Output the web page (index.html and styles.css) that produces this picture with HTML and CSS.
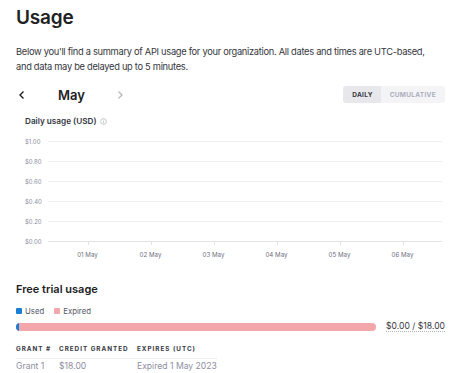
FILE: index.html
```html
<!DOCTYPE html>
<html>
<head>
<meta charset="utf-8">
<link rel="stylesheet" href="styles.css">
</head>
<body>
<main class="page">
  <h1 class="title">Usage</h1>
  <p class="intro">Below you'll find a summary of API usage for your organization. All dates and times are UTC-based, and data may be delayed up to 5 minutes.</p>

  <div class="toolbar">
    <div class="month-nav">
      <span class="arrow prev"><svg width="8" height="10" viewBox="0 0 8 10"><path d="M5.5 1.5 L2 5 L5.5 8.5" fill="none" stroke="#202123" stroke-width="1.4"/></svg></span>
      <span class="month">May</span>
      <span class="arrow next"><svg width="8" height="10" viewBox="0 0 8 10"><path d="M2.5 1.5 L6 5 L2.5 8.5" fill="none" stroke="#b4b4bc" stroke-width="1.2"/></svg></span>
    </div>
    <div class="seg">
      <span class="seg-btn active">DAILY</span>
      <span class="seg-btn">CUMULATIVE</span>
    </div>
  </div>

  <section class="chart">
    <div class="chart-title">Daily usage (USD) <svg class="info" width="7" height="7" viewBox="0 0 8 8"><circle cx="4" cy="4" r="3.3" fill="none" stroke="#b8b8c0" stroke-width="0.9"/><path d="M4 3.5 V6" stroke="#b8b8c0" stroke-width="0.9"/><circle cx="4" cy="2.3" r="0.5" fill="#b8b8c0"/></svg></div>
    <div class="rows">
      <div class="row"><span class="ylab">$1.00</span><span class="grid"></span></div>
      <div class="row"><span class="ylab">$0.80</span><span class="grid"></span></div>
      <div class="row"><span class="ylab">$0.60</span><span class="grid"></span></div>
      <div class="row"><span class="ylab">$0.40</span><span class="grid"></span></div>
      <div class="row"><span class="ylab">$0.20</span><span class="grid"></span></div>
      <div class="row"><span class="ylab">$0.00</span><span class="grid axis"></span></div>
    </div>
    <div class="xaxis">
      <span class="xtick">01 May</span>
      <span class="xtick">02 May</span>
      <span class="xtick">03 May</span>
      <span class="xtick">04 May</span>
      <span class="xtick">05 May</span>
      <span class="xtick">06 May</span>
    </div>
  </section>

  <section class="trial">
    <h2 class="trial-title">Free trial usage</h2>
    <div class="legend">
      <span class="key"><i class="sw used"></i>Used</span>
      <span class="key"><i class="sw expired"></i>Expired</span>
    </div>
    <div class="bar-row">
      <div class="bar"><div class="bar-used"></div></div>
      <span class="amount">$0.00 / $18.00</span>
    </div>
    <table class="grants">
      <thead>
        <tr><th class="c1">GRANT #</th><th class="c2">CREDIT GRANTED</th><th>EXPIRES (UTC)</th></tr>
      </thead>
      <tbody>
        <tr><td>Grant 1</td><td>$18.00</td><td>Expired 1 May 2023</td></tr>
      </tbody>
    </table>
  </section>
</main>
</body>
</html>
```
FILE: styles.css
```css
html, body { margin: 0; padding: 0; background: #fff; }
body {
  font-family: Inter, "Noto Sans", sans-serif;
  color: #202123;
  width: 474px;
  overflow: hidden;
}
.page { padding: 6px 29px 0 16px; }
.title {
  margin: 0;
  font-size: 19px;
  font-weight: 600;
  line-height: 24px;
  letter-spacing: -0.2px;
}
.intro {
  margin: 14px 0 0;
  max-width: 420px;
  font-size: 9.3px;
  line-height: 15px;
  color: #353740;
  letter-spacing: -0.29px;
}
.toolbar {
  margin-top: 12px;
  display: flex;
  align-items: center;
  justify-content: space-between;
  height: 17px;
}
.month-nav { display: flex; align-items: center; }
.arrow { display: flex; }
.prev { margin-left: 2px; }
.month {
  font-size: 13px;
  font-weight: 600;
  margin-left: 32px;
  width: 58px;
}
.seg { display: flex; height: 17px; border-radius: 3px; overflow: hidden; }
.seg-btn {
  font-size: 6.5px;
  font-weight: 700;
  letter-spacing: 0.3px;
  display: flex;
  align-items: center;
  padding: 0 9px;
  background: #f4f4f6;
  color: #acacbe;
}
.seg-btn.active { background: #e8e8ec; color: #353740; padding: 0 8px 0 9px; }
.chart { margin: 0 3px 0 9px; }
.chart-title {
  margin-top: 12px;
  font-size: 8.2px;
  font-weight: 600;
  line-height: 12px;
  color: #353740;
  display: flex;
  align-items: center;
  gap: 4px;
}
.rows { margin-top: 4px; }
.row { display: flex; align-items: center; height: 20px; }
.ylab {
  width: 23px;
  font-size: 6px;
  color: #8e8ea0;
}
.grid { flex: 1; height: 1px; background: #ececf1; }
.grid.axis { background: #e3e3e8; }
.xaxis {
  display: grid;
  grid-template-columns: repeat(6, 63px);
  margin-left: 31px;
  margin-top: 0;
}
.xtick {
  text-align: center;
  font-size: 6.2px;
  color: #6e6e80;
  position: relative;
}
.xtick::before {
  content: "";
  position: absolute;
  left: 50%;
  top: -10px;
  width: 1px;
  height: 4px;
  background: #e3e3e8;
}
.trial { margin-top: 24px; }
.trial-title {
  margin: 0;
  font-size: 11px;
  font-weight: 600;
  line-height: 14px;
}
.legend { display: flex; gap: 10px; margin-top: 10px; font-size: 7.8px; color: #565869; }
.key { display: flex; align-items: center; gap: 3px; }
.sw { display: inline-block; width: 6px; height: 6px; border-radius: 1px; }
.sw.used { background: #1a7fd4; }
.sw.expired { background: #f4a7ab; }
.bar-row { display: flex; align-items: center; margin-top: 5px; gap: 10px; }
.bar {
  flex: 0 0 360px;
  height: 8px;
  border-radius: 4px;
  background: #f4a7ab;
  overflow: hidden;
}
.bar-used { width: 3px; height: 100%; background: #1a7fd4; }
.amount {
  font-size: 8.6px;
  color: #353740;
  border-bottom: 1px dotted #b4b4bc;
  line-height: 10px;
}
.grants { border-collapse: collapse; margin-top: 9px; }
.grants th {
  text-align: left;
  font-size: 6.3px;
  font-weight: 700;
  letter-spacing: 1px;
  color: #353740;
  padding: 4px 0 5px 0;
  border-bottom: 1px solid #ececf1;
}
.grants .c1 { width: 43px; }
.grants .c2 { width: 78px; }
.grants td {
  font-size: 8.6px;
  color: #8e8ea0;
  padding: 2px 0 0 0;
}
.grants td:last-child, .grants th:last-child { width: 80px; }
```
